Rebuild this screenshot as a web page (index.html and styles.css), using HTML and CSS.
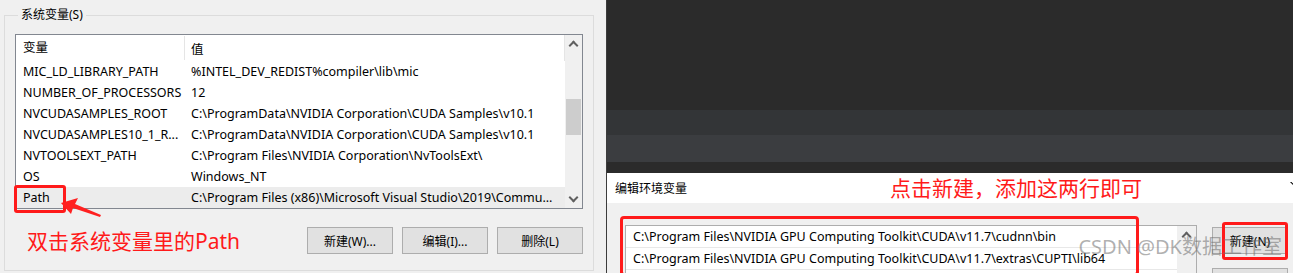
FILE: index.html
```html
<!DOCTYPE html>
<html lang="zh-CN">
<head>
  <meta charset="UTF-8">
  <title>环境变量</title>
  <link rel="stylesheet" href="styles.css">
</head>
<body>

<div class="screen">
  <!-- 左边：系统属性里的系统变量 -->
  <section class="sysvars">
    <div class="group">
      <span class="group-title">系统变量(S)</span>
      <div class="listview">
        <div class="lv-main">
          <div class="lv-head"><span class="col-name">变量</span><span class="col-val">值</span></div>
          <div class="lv-row"><span class="col-name">MIC_LD_LIBRARY_PATH</span><span class="col-val">%INTEL_DEV_REDIST%compiler\lib\mic</span></div>
          <div class="lv-row"><span class="col-name">NUMBER_OF_PROCESSORS</span><span class="col-val">12</span></div>
          <div class="lv-row"><span class="col-name">NVCUDASAMPLES_ROOT</span><span class="col-val">C:\ProgramData\NVIDIA Corporation\CUDA Samples\v10.1</span></div>
          <div class="lv-row"><span class="col-name">NVCUDASAMPLES10_1_R...</span><span class="col-val">C:\ProgramData\NVIDIA Corporation\CUDA Samples\v10.1</span></div>
          <div class="lv-row"><span class="col-name">NVTOOLSEXT_PATH</span><span class="col-val">C:\Program Files\NVIDIA Corporation\NvToolsExt\</span></div>
          <div class="lv-row"><span class="col-name">OS</span><span class="col-val">Windows_NT</span></div>
          <div class="lv-row selected"><span class="col-name"><span class="mark">Path</span></span><span class="col-val">C:\Program Files (x86)\Microsoft Visual Studio\2019\Commu...</span></div>
        </div>
        <div class="vscroll">
          <span class="arrow up"></span>
          <div class="track"><div class="thumb"></div></div>
          <span class="arrow down"></span>
        </div>
      </div>
      <div class="actions">
        <span class="note">双击系统变量里的Path</span>
        <div class="btns">
          <button>新建(W)...</button>
          <button>编辑(I)...</button>
          <button>删除(L)</button>
        </div>
      </div>
      <svg class="pointer" width="46" height="22" viewBox="0 0 46 22">
        <polygon points="3,7 20,2 17,8 43,19 42,21 15,12 13,18" fill="#ff2020"/>
      </svg>
    </div>
  </section>

  <!-- 右边：编辑环境变量对话框 -->
  <section class="desktop">
    <div class="band band-a"></div>
    <div class="band band-b"></div>
    <div class="band band-c"></div>
    <div class="band band-d"></div>
    <div class="dialog">
      <div class="dlg-title">
        <span class="dlg-name">编辑环境变量</span>
        <span class="note big">点击新建，添加这两行即可</span>
        <span class="close"></span>
      </div>
      <div class="dlg-body">
        <div class="pathlist">
          <div class="pl-rows">
            <div class="pl-row">C:\Program Files\NVIDIA GPU Computing Toolkit\CUDA\v11.7\cudnn\bin</div>
            <div class="pl-row">C:\Program Files\NVIDIA GPU Computing Toolkit\CUDA\v11.7\extras\CUPTI\lib64</div>
          </div>
          <div class="vscroll small"><span class="arrow up"></span></div>
        </div>
        <div class="side-btns">
          <button class="marked">新建(N)</button>
          <button></button>
        </div>
      </div>
      <div class="redbox"></div>
    </div>
    <span class="watermark">CSDN @DK数据工作室</span>
  </section>
</div>

</body>
</html>
```

FILE: styles.css
```css
/* 截图还原：系统变量 + 编辑环境变量 */
* {
  box-sizing: border-box;
}

body {
  margin: 0;
  font-family: "Noto Sans", "Noto Sans CJK SC", sans-serif;
  font-size: 12.5px;
  color: #000;
  background: #f0f0f0;
}

.screen {
  display: flex;
  width: 1293px;
  height: 273px;
  overflow: hidden;
}

/* ---------- 左边 ---------- */
.sysvars {
  width: 606px;
  flex: none;
  background: #f0f0f0;
  padding: 15px 0 0 4px;
}

.group {
  position: relative;
  width: 590px;
  height: 256px;
  border: 1px solid #dcdcdc;
  padding: 0 10px;
}

.group-title {
  display: block;
  width: fit-content;
  margin: -9px 0 0 3px;
  padding: 0 3px;
  background: #f0f0f0;
  font-size: 12px;
  line-height: 16px;
}

.listview {
  display: flex;
  margin-top: 11px;
  width: 568px;
  height: 175px;
  border: 1px solid #828790;
  background: #fff;
}

.lv-main {
  flex: 1;
}

.lv-head, .lv-row {
  display: flex;
  align-items: center;
  height: 21px;
}

.lv-head {
  height: 26px;
  border-right: 1px solid #e5e5e5;
}

.col-name {
  width: 169px;
  padding-left: 7px;
  white-space: nowrap;
}

.lv-head .col-name {
  height: 24px;
  line-height: 24px;
  border-right: 1px solid #e5e5e5;
}

.col-val {
  padding-left: 6px;
  white-space: nowrap;
}

.lv-row.selected {
  background: #ececec;
}

.mark {
  position: relative;
}

.mark::after {
  content: "";
  position: absolute;
  left: -9px;
  top: -4px;
  width: 46px;
  height: 22px;
  border: 3px solid #ff1a1a;
  border-radius: 3px;
}

.vscroll {
  width: 17px;
  flex: none;
  display: flex;
  flex-direction: column;
  background: #f0f0f0;
}

.arrow {
  height: 17px;
  display: flex;
  align-items: center;
  justify-content: center;
}

.arrow::before {
  content: "";
  width: 5px;
  height: 5px;
  border-left: 2px solid #606060;
  border-top: 2px solid #606060;
  transform: translateY(2px) rotate(45deg);
}

.arrow.down::before {
  transform: translateY(-2px) rotate(225deg);
}

.track {
  flex: 1;
  padding-top: 47px;
}

.thumb {
  height: 36px;
  margin: 0 1px;
  background: #cdcdcd;
}

.actions {
  display: flex;
  justify-content: space-between;
  align-items: center;
  margin-top: 18px;
  padding-left: 12px;
}

.note {
  color: #ff1a1a;
  font-size: 21px;
  line-height: 26px;
}

.btns {
  display: flex;
  gap: 9px;
}

button {
  font: inherit;
  font-size: 12px;
  height: 27px;
  width: 86px;
  padding: 0;
  background: #e1e1e1;
  border: 1px solid #adadad;
  color: #000;
}

.pointer {
  position: absolute;
  left: 53px;
  top: 180px;
}

/* ---------- 右边 ---------- */
.desktop {
  position: relative;
  flex: 1;
  display: flex;
  flex-direction: column;
  background: #2b2b2b;
  border-left: 1px solid #3c3c3c;
}

.band { flex: none; }
.band-a { height: 110px; background: #2b2b2b; }
.band-b { height: 25px; background: #333537; }
.band-c { height: 27px; background: #3b3d40; }
.band-d { height: 11px; background: #2b2b2b; }

.dialog {
  position: relative;
  flex: 1;
  background: #f0f0f0;
}

.dlg-title {
  display: flex;
  align-items: center;
  height: 30px;
  background: #fff;
  padding-left: 8px;
}

.dlg-name {
  width: 275px;
  font-size: 12px;
}

.note.big {
  font-size: 21px;
}

.close {
  position: relative;
  margin-left: auto;
  width: 6px;
  height: 12px;
  overflow: hidden;
}

.close::before {
  content: "";
  position: absolute;
  left: 1px;
  top: -2px;
  width: 1px;
  height: 16px;
  background: #000;
  transform: rotate(-45deg);
  transform-origin: 0 0;
}

.dlg-body {
  display: flex;
  align-items: flex-start;
  padding: 22px 0 0 18px;
}

.pathlist {
  display: flex;
  width: 572px;
  height: 60px;
  border: 1px solid #adadad;
  background: #fff;
}

.pl-rows {
  flex: 1;
}

.pl-row {
  height: 22px;
  line-height: 21px;
  padding-left: 7px;
  white-space: nowrap;
  border-bottom: 1px solid #e8e8e8;
}

.vscroll.small {
  width: 19px;
}

.side-btns {
  display: flex;
  flex-direction: column;
  gap: 14px;
  margin: 2px 0 0 15px;
}

.side-btns button {
  width: 76px;
  height: 27px;
}

.marked {
  position: relative;
}

.marked::after {
  content: "";
  position: absolute;
  left: 9px;
  top: -6px;
  width: 60px;
  height: 32px;
  border: 3px solid #ff1a1a;
  border-radius: 3px;
}

.redbox {
  position: absolute;
  left: 13px;
  top: 43px;
  width: 519px;
  height: 60px;
  border: 3px solid #ff1a1a;
  border-radius: 4px;
}

.watermark {
  position: absolute;
  right: 11px;
  bottom: 13px;
  font-size: 20px;
  color: rgba(110, 110, 110, 0.55);
  white-space: nowrap;
}
```
